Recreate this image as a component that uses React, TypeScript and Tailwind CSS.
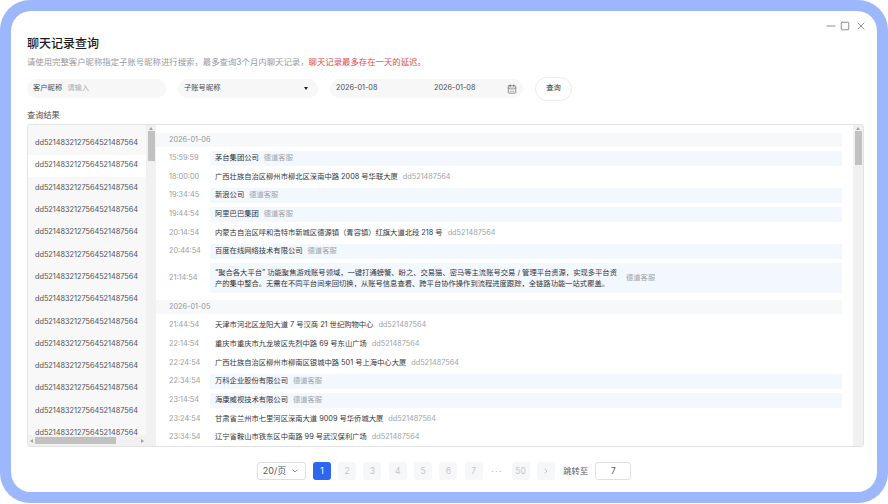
import React from "react";
import { X, Minus, Square, ChevronDown, ChevronRight, CalendarDays } from "lucide-react";

const F = { fontFamily: '"Inter","Noto Sans CJK SC",sans-serif' };

type Row = { t: string; text: string; tag: string; hl?: boolean };
const day1: Row[] = [
  { t: "15:59:59", text: "茅台集团公司", tag: "德道客服", hl: true },
  { t: "18:00:00", text: "广西壮族自治区柳州市柳北区深南中路 2008 号华联大厦", tag: "dd521487564" },
  { t: "19:34:45", text: "新浪公司", tag: "德道客服", hl: true },
  { t: "19:44:54", text: "阿里巴巴集团", tag: "德道客服", hl: true },
  { t: "20:14:54", text: "内蒙古自治区呼和浩特市新城区德源镇（青容镇）红旗大道北段 218 号", tag: "dd521487564" },
  { t: "20:44:54", text: "百度在线网络技术有限公司", tag: "德道客服", hl: true },
];
const day2: Row[] = [
  { t: "21:44:54", text: "天津市河北区龙阳大道 7 号汉商 21 世纪购物中心", tag: "dd521487564" },
  { t: "22:14:54", text: "重庆市重庆市九龙坡区先烈中路 69 号东山广场", tag: "dd521487564" },
  { t: "22:24:54", text: "广西壮族自治区柳州市柳南区银城中路 501 号上海中心大厦", tag: "dd521487564" },
  { t: "22:34:54", text: "万科企业股份有限公司", tag: "德道客服", hl: true },
  { t: "23:14:54", text: "海康威视技术有限公司", tag: "德道客服", hl: true },
  { t: "23:24:54", text: "甘肃省兰州市七里河区深南大道 9009 号华侨城大厦", tag: "dd521487564" },
  { t: "23:34:54", text: "辽宁省鞍山市铁东区中南路 99 号武汉保利广场", tag: "dd521487564" },
];

function ChatRow({ r }: { r: Row }) {
  return (
    <div className="flex h-[15px] items-center mb-[3.7px]">
      <div className="w-[54px] pl-[13px] shrink-0 text-[7.3px] text-[#9a9da2]">{r.t}</div>
      <div className={`flex-1 h-full flex items-center gap-[5px] pl-[5px] ${r.hl ? "bg-[#f3f7fe]" : ""}`}>
        <span className="text-[7.3px] text-[#33363b]">{r.text}</span>
        <span className="text-[7.3px] text-[#a0a3a8]">{r.tag}</span>
      </div>
    </div>
  );
}

function DateRow({ d }: { d: string }) {
  return (
    <div className="h-[14px] bg-[#f7f8fa] flex items-center pl-[13px] text-[7.3px] text-[#92959b] mb-[4px]">{d}</div>
  );
}

function VBar({ h }: { h: string }) {
  return (
    <div className="w-[10px] shrink-0 bg-[#f1f1f1] flex flex-col items-center">
      <div className="h-[6px] flex items-center justify-center">
        <div className="border-x-[2px] border-b-[3px] border-x-transparent border-b-[#a3a3a3]" />
      </div>
      <div className={`${h} w-[7px] bg-[#c1c1c1]`} />
    </div>
  );
}

function Page({ n, active }: { n: string; active?: boolean }) {
  return (
    <div className={`w-[18px] h-[18px] rounded-[3px] flex items-center justify-center text-[8.5px] ${active ? "bg-[#2f66f0] text-white" : "bg-[#f6f7f8] text-[#c5c7ca]"}`}>
      {n}
    </div>
  );
}

export default function App() {
  return (
    <div style={F} className="w-[888px] h-[504px] bg-white overflow-hidden pb-px">
      <div className="w-full h-[503px] rounded-[30px] bg-[#9db7fd] p-[11px]">
        <div className="h-[481px] bg-white rounded-[20px] flex flex-col px-[16px]">
          <div className="h-[14px] mt-[8px] flex justify-end items-center text-[#77797d] -mr-[6px]">
            <Minus size={14} strokeWidth={1.4} />
            <Square size={10} strokeWidth={2} className="ml-[2px]" />
            <X size={12} strokeWidth={1.6} className="ml-[5px]" />
          </div>
          <div className="mt-[3px] h-[16px] flex items-center text-[12px] font-medium leading-none text-[#1b1c1f]">聊天记录查询</div>
          <div className="mt-[4px] h-[12px] flex items-center text-[8.4px] text-[#97999e]">
            请使用完整客户昵称指定子账号昵称进行搜索，最多查询3个月内聊天记录，
            <span className="text-[#e5484d]">聊天记录最多存在一天的延迟。</span>
          </div>
          <div className="mt-[8px] h-[25px] flex items-center gap-[12px] text-[7.3px]">
            <div className="w-[139px] h-[19px] rounded-full bg-[#f7f7f8] flex items-center pl-[6px] gap-[5px]">
              <span className="text-[#4c4e52]">客户昵称</span>
              <span className="text-[#a9acb1]">请输入</span>
            </div>
            <div className="w-[140px] h-[19px] rounded-full bg-[#f7f7f8] flex items-center justify-between px-[6px] pr-[10px]">
              <span className="text-[#4c4e52]">子账号昵称</span>
              <span className="border-x-[2px] border-t-[3px] border-x-transparent border-t-[#222]" />
            </div>
            <div className="w-[193px] h-[19px] rounded-full bg-[#f7f7f8] flex items-center pl-[6px] pr-[6px] text-[#4c4e52]">
              <span className="w-[98px]">2026-01-08</span>
              <span className="flex-1">2026-01-08</span>
              <CalendarDays size={10} strokeWidth={1.5} className="text-[#55585c]" />
            </div>
            <div className="w-[37px] h-[24px] rounded-full border border-[#ececee] bg-white flex items-center justify-center text-[#333]">查询</div>
          </div>
          <div className="mt-[8px] h-[12px] flex items-center text-[8.2px] text-[#4c4e52]">查询结果</div>
          <div className="mt-[3px] w-[837px] h-[323px] border border-[#e3e3e3] rounded-[3px] overflow-hidden flex">
            <div className="w-[128px] shrink-0 flex flex-col">
              <div className="flex-1 flex min-h-0">
                <div className="w-[118px] bg-[#f8f8f9] overflow-hidden pt-[7.5px] text-[7.3px] text-[#4e5155]">
                  {Array.from({ length: 14 }).map((_, i) => (
                    <div key={i} className={`h-[22.3px] flex items-center pl-[7px] ${i === 1 ? "bg-white" : ""}`}>dd5214832127564521487564</div>
                  ))}
                </div>
                <VBar h="h-[30px]" />
              </div>
              <div className="h-[11px] bg-[#f1f1f1] flex items-center pl-[2px]">
                <div className="border-y-[2px] border-r-[3px] border-y-transparent border-r-[#a3a3a3]" />
                <div className="ml-[2px] w-[81px] h-[7px] bg-[#c1c1c1]" />
                <div className="ml-[25px] border-y-[2px] border-l-[3px] border-y-transparent border-l-[#a3a3a3]" />
              </div>
            </div>
            <div className="flex-1 min-w-0 overflow-hidden pt-[8px] pr-[11px]">
              <DateRow d="2026-01-06" />
              {day1.map((r, i) => <ChatRow key={i} r={r} />)}
              <div className="flex h-[30px] items-center mb-[7px] mt-[0.5px]">
                <div className="w-[54px] pl-[13px] shrink-0 text-[7.3px] text-[#9a9da2]">21:14:54</div>
                <div className="flex-1 h-full flex items-center bg-[#f3f7fe] pl-[5px] gap-[8px]">
                  <div className="w-[403px] text-[7.3px] leading-[11.5px] text-[#33363b]">
                    “聚合各大平台” 功能聚焦游戏账号领域，一键打通螃蟹、盼之、交易猫、密马等主流账号交易 / 管理平台资源，实现多平台资产的集中整合。无需在不同平台间来回切换，从账号信息查看、跨平台协作操作到流程进度跟踪，全链路功能一站式覆盖。
                  </div>
                  <span className="text-[7.3px] text-[#a0a3a8]">德道客服</span>
                </div>
              </div>
              <DateRow d="2026-01-05" />
              {day2.map((r, i) => <ChatRow key={i} r={r} />)}
            </div>
            <VBar h="h-[34px]" />
          </div>
          <div className="flex-1 flex items-center justify-center gap-[7.3px] text-[8.3px] pt-[3px]">
            <div className="w-[49px] h-[18px] rounded-[3px] border border-[#dfe0e2] flex items-center justify-center gap-[5px] text-[#55585c] text-[9px]">
              20/页 <ChevronDown size={8} />
            </div>
            <Page n="1" active />
            <Page n="2" /><Page n="3" /><Page n="4" /><Page n="5" /><Page n="6" /><Page n="7" />
            <div className="w-[14.4px] text-center text-[#b5b7ba] tracking-[1.5px] whitespace-nowrap">···</div>
            <Page n="50" />
            <div className="w-[18px] h-[18px] rounded-[3px] bg-[#f6f7f8] flex items-center justify-center text-[#a9acb1]"><ChevronRight size={8} /></div>
            <span className="text-[#55585c] ml-[1px]">跳转至</span>
            <div className="w-[36px] h-[18px] rounded-[3px] border border-[#dfe0e2] flex items-center justify-center text-[#55585c]">7</div>
          </div>
        </div>
      </div>
    </div>
  );
}
